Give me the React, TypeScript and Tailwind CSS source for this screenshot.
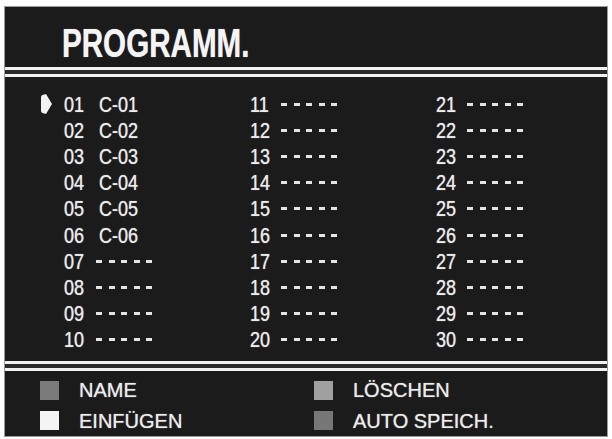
import React from "react";

const font = { fontFamily: '"Liberation Sans", Arial, sans-serif' };

function Dashes() {
  return (
    <span className="flex items-center gap-[6.5px]">
      {[0, 1, 2, 3, 4].map((i) => (
        <span key={i} className="block h-[3px] w-[6px] bg-[#e4e4e4]" />
      ))}
    </span>
  );
}

function Arrow() {
  return (
    <svg width="13" height="22" viewBox="0 0 13 22" className="block">
      <path d="M1 4 Q1 2.5 2.5 2 L6 1 L12 11 L6 21 L2.5 20 Q1 19.5 1 18 Z" fill="#f2f2f2" />
    </svg>
  );
}

function DoubleLine() {
  return (
    <div className="flex flex-col">
      <div className="h-[3px] bg-[#f2f2f2]" />
      <div className="h-[4px] bg-[#2a2a2a]" />
      <div className="h-[3px] bg-[#f2f2f2]" />
    </div>
  );
}

type Prog = { num: string; name?: string };

function Row({ p, selected, first }: { p: Prog; selected?: boolean; first?: boolean }) {
  return (
    <div className="flex h-[26.2px] items-center">
      {first && <span className="flex w-[24px] items-center">{selected && <Arrow />}</span>}
      <span className={first ? "w-[35px]" : "w-[31px]"}>
        <span className="inline-block origin-left scale-x-[0.82]">{p.num}</span>
      </span>
      {p.name ? (
        <span className="inline-block origin-left scale-x-[0.82]">{p.name}</span>
      ) : (
        <span className={first ? "-ml-[3px]" : ""}>
          <Dashes />
        </span>
      )}
    </div>
  );
}

export default function App() {
  const col1: Prog[] = [
    { num: "01", name: "C-01" },
    { num: "02", name: "C-02" },
    { num: "03", name: "C-03" },
    { num: "04", name: "C-04" },
    { num: "05", name: "C-05" },
    { num: "06", name: "C-06" },
    { num: "07" },
    { num: "08" },
    { num: "09" },
    { num: "10" },
  ];
  const col2: Prog[] = Array.from({ length: 10 }, (_, i) => ({ num: String(11 + i) }));
  const col3: Prog[] = Array.from({ length: 10 }, (_, i) => ({ num: String(21 + i) }));

  return (
    <div className="h-[439px] w-[612px] bg-white pl-[4px] pr-[4px] pt-[6px] pb-[2px]" style={font}>
      <div className="flex h-full flex-col border border-[#9a9a9a] bg-[#1b1b1b] text-[#ececec] [text-shadow:0_0_1px_rgba(255,255,255,0.7)]">
        <div className="h-[60px] pl-[57px] pt-[16px]">
          <span className="inline-block origin-left scale-x-[0.74] text-[40px] font-bold leading-[40px] text-[#f4f4f4]">
            PROGRAMM.
          </span>
        </div>
        <DoubleLine />
        <div className="flex h-[284px] pl-[35px] pt-[14px] text-[22px]">
          <div className="w-[210px]">
            {col1.map((p, i) => (
              <Row key={p.num} p={p} first selected={i === 0} />
            ))}
          </div>
          <div className="w-[186px]">
            {col2.map((p) => (
              <Row key={p.num} p={p} />
            ))}
          </div>
          <div className="w-[170px]">
            {col3.map((p) => (
              <Row key={p.num} p={p} />
            ))}
          </div>
        </div>
        <DoubleLine />
        <div className="grid flex-1 grid-cols-[274px_1fr] pl-[35px] pt-[4px] text-[20px]">
          {[
            { c: "bg-[#7a7a7a]", t: "NAME" },
            { c: "bg-[#a0a0a0]", t: "LÖSCHEN" },
            { c: "bg-[#f4f4f4]", t: "EINFÜGEN" },
            { c: "bg-[#777777]", t: "AUTO SPEICH." },
          ].map((it) => (
            <div key={it.t} className="flex h-[30px] items-center">
              <span className={`mr-[20px] inline-block h-[19px] w-[19px] ${it.c}`} />
              <span>{it.t}</span>
            </div>
          ))}
        </div>
      </div>
    </div>
  );
}
